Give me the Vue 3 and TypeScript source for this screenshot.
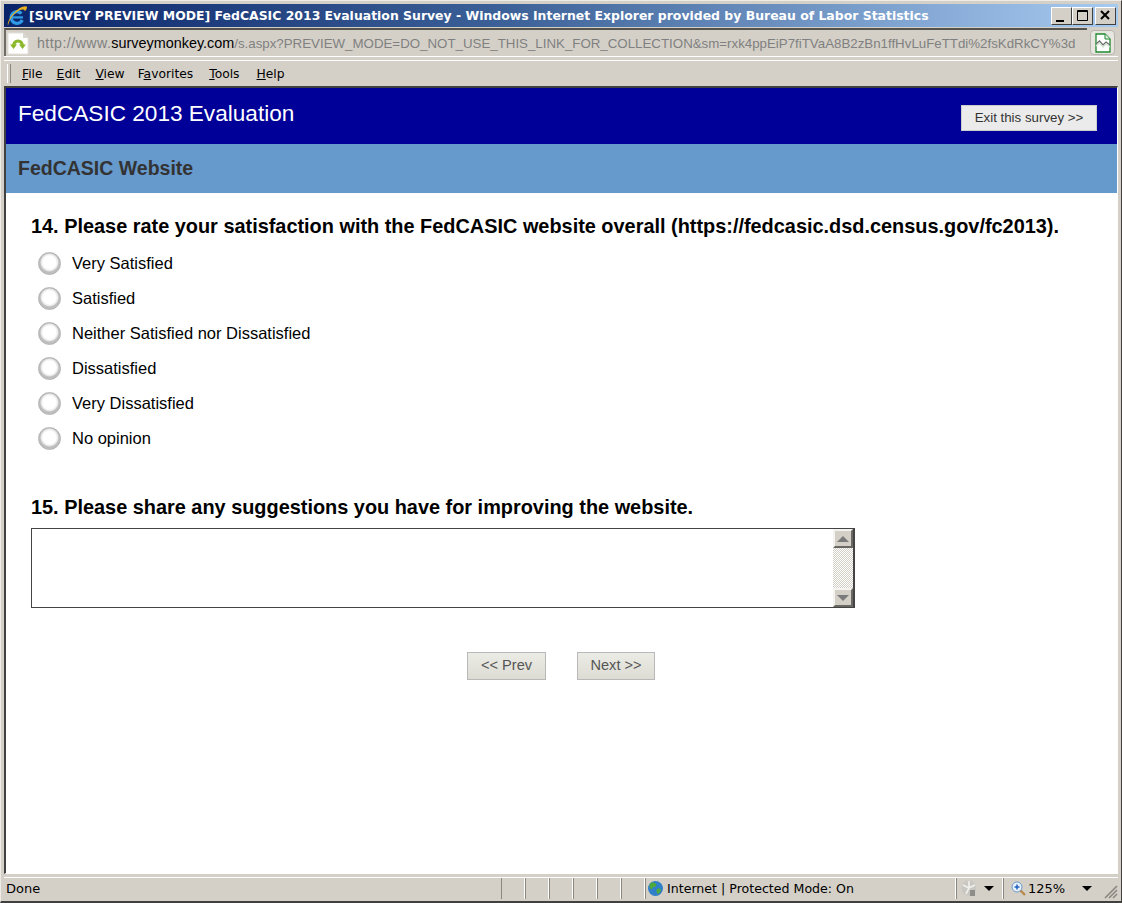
<template>
  <div class="window">
    <header class="titlebar">
      <svg class="ie-logo" width="22" height="22" viewBox="0 0 22 22">
        <circle cx="11" cy="12.500" r="5.800" fill="none" stroke="#2f9be6" stroke-width="3.400" stroke-dasharray="29 7" transform="rotate(25 11 12.500)" />
        <rect x="6" y="11.300" width="11" height="2.200" fill="#2f9be6" />
        <path d="M2 20.500C.5 17.500 6 8 13 3.500c4-2.500 7.500-3 8-1.500.3 1-.5 2.500-2 4-.6-2-3-2-5.500-.8C8 8 3.500 14 2 20.500z" fill="#e9b020" />
      </svg>
      <span class="title-text">[SURVEY PREVIEW MODE] FedCASIC 2013 Evaluation Survey - Windows Internet Explorer provided by Bureau of Labor Statistics</span>
      <div class="win-buttons">
        <button class="win-btn"><svg width="21" height="17" viewBox="0 0 21 17"><rect x="5" y="13" width="8" height="2" fill="#000" /></svg></button>
        <button class="win-btn"><svg width="21" height="17" viewBox="0 0 21 17"><path d="M5.500 3.500h10v10h-10z M5 4.500h11" fill="none" stroke="#000" /></svg></button>
        <button class="win-btn close"><svg width="21" height="17" viewBox="0 0 21 17"><path d="M6 4l8 8M14 4l-8 8" stroke="#000" stroke-width="2" /></svg></button>
      </div>
    </header>

    <div class="addressbar">
      <div class="url-field">
        <svg class="page-icon" width="22" height="23" viewBox="0 0 22 23">
          <path d="M1 1h15l5 5v16H1z" fill="#fff" stroke="#e2e0db" />
          <path d="M16 1v5h5z" fill="#d8d6d0" />
          <path d="M6.500 14c.5-3.500 2.300-5 4.500-5s4 1.500 4.500 5" fill="none" stroke="#8cb82b" stroke-width="3.200" />
          <path d="M3 12.500h7L6.500 17zM12 12.500h7L15.500 17z" fill="#8cb82b" />
        </svg>
        <span class="url"><span class="scheme">http://www.</span><span class="domain">surveymonkey.com</span><span class="dim">/s.aspx?PREVIEW_MODE=DO_NOT_USE_THIS_LINK_FOR_COLLECTION&amp;sm=rxk4ppEiP7fiTVaA8B2zBn1ffHvLuFeTTdi%2fsKdRkCY%3d</span></span>
      </div>
      <button class="compat-btn">
        <svg width="16" height="20" viewBox="0 0 16 20">
          <path d="M1 1h9l5 5v13H1z" fill="#fff" stroke="#1f8a2e" stroke-width="1.300" />
          <path d="M10 1v5h5" fill="#dff0df" stroke="#1f8a2e" />
          <path d="M1 11l3.500-3 3.500 4 3-3 4 3" fill="none" stroke="#6d6d6d" stroke-width="1.300" />
          <path d="M1 13l3.500-3 3.500 4 3-3 4 3" fill="none" stroke="#cfe6cf" stroke-width="1.300" />
        </svg>
      </button>
    </div>

    <nav class="menubar">
      <span class="grip"></span>
      <span class="menu-item file"><u>F</u>ile</span>
      <span class="menu-item"><u>E</u>dit</span>
      <span class="menu-item view"><u>V</u>iew</span>
      <span class="menu-item favorites">F<u>a</u>vorites</span>
      <span class="menu-item tools"><u>T</u>ools</span>
      <span class="menu-item"><u>H</u>elp</span>
    </nav>

    <main class="viewport">
      <div class="survey-head">
        <h1>FedCASIC 2013 Evaluation</h1>
        <button class="exit-btn">Exit this survey &gt;&gt;</button>
      </div>
      <div class="page-title">FedCASIC Website</div>

      <section class="survey-body">
        <h2>14. Please rate your satisfaction with the FedCASIC website overall (https://fedcasic.dsd.census.gov/fc2013).</h2>
        <ul class="options">
          <li v-for="opt in options" :key="opt" class="option">
            <span class="radio"></span>
            <span>{{ opt }}</span>
          </li>
        </ul>

        <h2 class="q15">15. Please share any suggestions you have for improving the website.</h2>
        <div class="textarea">
          <div class="scrollbar">
            <span class="sb-btn"><i class="tri up"></i></span>
            <span class="sb-track"></span>
            <span class="sb-btn"><i class="tri down"></i></span>
          </div>
        </div>

        <div class="nav-buttons">
          <button class="nav-btn prev">&lt;&lt; Prev</button>
          <button class="nav-btn next">Next &gt;&gt;</button>
        </div>
      </section>
    </main>

    <footer class="statusbar">
      <div class="status-text">Done</div>
      <div class="status-cell"></div>
      <div class="status-cell"></div>
      <div class="status-cell"></div>
      <div class="status-cell"></div>
      <div class="status-cell"></div>
      <div class="status-cell"></div>
      <div class="status-zone">
        <svg width="17" height="17" viewBox="0 0 17 17">
          <circle cx="8.500" cy="8.500" r="7.500" fill="#2f7fc9" />
          <path d="M4 3c2-1 4 0 5 1s0 3-2 3-1 3-3 2-2-5 0-6zM10 9c2-1 4 0 4 1s-2 4-3 4-2-4-1-5z" fill="#4fa83d" />
        </svg>
        <span>Internet | Protected Mode: On</span>
      </div>
      <div class="status-tool">
        <svg width="20" height="19" viewBox="0 0 20 19">
          <circle cx="9" cy="9" r="7.500" fill="#c9c7c1" />
          <path d="M3 6l6 3-3 6M9 2l0 7 6-3" fill="none" stroke="#f2f1ee" stroke-width="1.600" />
          <rect x="10" y="11" width="5" height="6" fill="#8f8d88" />
        </svg>
        <i class="caret"></i>
      </div>
      <div class="status-zoom">
        <svg width="15" height="15" viewBox="0 0 15 15">
          <line x1="9" y1="9" x2="14" y2="14" stroke="#b8894a" stroke-width="2.400" />
          <circle cx="6" cy="6" r="5" fill="#e8f2fb" stroke="#6f97c4" />
          <path d="M3.500 6h5M6 3.500v5" stroke="#1f5fc0" stroke-width="1.500" />
        </svg>
        <span>125%</span>
        <i class="caret zoom-caret"></i>
      </div>
      <svg class="grip-corner" width="14" height="14" viewBox="0 0 14 14">
        <path d="M13 1L1 13M13 5l-8 8M13 9l-4 4" stroke="#8a8780" stroke-width="1.600" />
      </svg>
    </footer>
  </div>
</template>

<script setup lang="ts">
const options: string[] = [
  'Very Satisfied',
  'Satisfied',
  'Neither Satisfied nor Dissatisfied',
  'Dissatisfied',
  'Very Dissatisfied',
  'No opinion',
]
</script>

<style>
html, body {
  margin: 0;
  background: #d4d0c8;
}
</style>

<style scoped>
.window {
  width: 1122px;
  height: 903px;
  box-sizing: border-box;
  background: #d4d0c8;
  border: 1px solid;
  border-color: #eeece7 #404040 #404040 #eeece7;
  border-bottom-width: 2px;
  padding: 3px 3px 2px 3px;
  display: flex;
  flex-direction: column;
  overflow: hidden;
  position: relative;
  font-family: "Liberation Sans", Arial, sans-serif;
}

.titlebar {
  height: 23px;
  flex: none;
  display: flex;
  align-items: center;
  background: linear-gradient(90deg, #0a246a 0%, #3c6198 45%, #a6caf0 100%);
  color: #fff;
}

.ie-logo {
  margin: 0 1px 0 2px;
  flex: none;
}

.title-text {
  font-family: "DejaVu Sans", sans-serif;
  font-size: 12.45px;
  font-weight: 700;
  white-space: nowrap;
  flex: 1;
  overflow: hidden;
}

.win-buttons {
  display: flex;
  margin-right: 2px;
}

.win-btn {
  width: 21px;
  height: 18px;
  padding: 0;
  background: #d4d0c8;
  border: 1px solid;
  border-color: #fff #404040 #404040 #fff;
  display: block;
}
.win-btn svg {
  display: block;
  margin: -1px;
}
.win-btn.close {
  margin-left: 2px;
}

.addressbar {
  height: 30px;
  flex: none;
  display: flex;
  border-bottom: 1px solid #fff;
  box-sizing: border-box;
}

.url-field {
  flex: 1;
  margin: 1px 3px 0 0;
  display: flex;
  align-items: center;
  border-top: 2px solid #55534e;
  border-left: 2px solid #6e6c67;
  height: 28px;
  box-sizing: border-box;
  overflow: hidden;
}

.page-icon {
  margin: 0 8px 0 1px;
  flex: none;
}

.url {
  font-size: 13.3px;
  color: #808080;
  white-space: nowrap;
}
.scheme {
  font-size: 14.2px;
  letter-spacing: 0.45px;
}
.domain {
  font-size: 14.4px;
  color: #000;
}

.compat-btn {
  width: 25px;
  height: 25px;
  margin: 3px 3px 0 0;
  padding: 0;
  background: #e8e6e1;
  border: 1px solid #b8b5ae;
  border-radius: 4px;
  display: flex;
  align-items: center;
  justify-content: center;
}

.menubar {
  height: 26px;
  margin-top: 3px;
  flex: none;
  display: flex;
  align-items: center;
  border-top: 1px solid #fff;
  box-sizing: border-box;
  font-family: "DejaVu Sans", sans-serif;
  font-size: 12.3px;
  color: #000;
  padding-left: 3px;
}

.grip {
  width: 2px;
  height: 19px;
  border-left: 1px solid #fff;
  border-right: 1px solid #8a8780;
  margin-right: 11px;
}

.menu-item {
  margin-right: 15px;
}
.menu-item.file {
  margin-right: 14px;
}
.menu-item.view {
  margin-right: 13px;
}
.menu-item.favorites {
  margin-right: 16px;
}
.menu-item.tools {
  margin-right: 17px;
}

.viewport {
  flex: 1;
  min-height: 0;
  background: #fff;
  border-top: 2px solid #404040;
  border-left: 2px solid #404040;
  border-right: 1px solid #fff;
  border-bottom: 1px solid #fff;
}

.survey-head {
  height: 56px;
  background: #000099;
  display: flex;
  justify-content: space-between;
  box-sizing: border-box;
  padding: 0 20px 0 12px;
}

.survey-head h1 {
  margin: 13px 0 0;
  font-size: 22.6px;
  line-height: 26px;
  font-weight: 400;
  color: #fff;
}

.exit-btn {
  margin-top: 17px;
  width: 136px;
  height: 26px;
  padding: 0 0 2px;
  background: #ebebeb;
  border: 1px solid #ccc;
  font-family: "Liberation Sans", sans-serif;
  font-size: 13.3px;
  color: #333;
}

.page-title {
  height: 49px;
  background: #6699cc;
  box-sizing: border-box;
  padding: 13px 0 0 12px;
  font-size: 19.5px;
  line-height: 23px;
  font-weight: 700;
  color: #333;
}

.survey-body {
  padding: 20px 0 0 25px;
  color: #000;
}

h2 {
  margin: 0;
  font-size: 19.9px;
  line-height: 26px;
  font-weight: 700;
  white-space: nowrap;
}

.options {
  list-style: none;
  margin: 7px 0 0 7px;
  padding: 0;
}

.option {
  height: 35px;
  display: flex;
  align-items: center;
  gap: 11px;
  font-size: 16.5px;
}

.radio {
  width: 23px;
  height: 23px;
  box-sizing: border-box;
  border-radius: 50%;
  border: 1px solid #b4b4b4;
  background: radial-gradient(circle closest-side at 50% 45%, #fff 68%, #e8e8e8 88%, #bebebe 100%);
  flex: none;
}

.q15 {
  margin-top: 38px;
}

.textarea {
  margin-top: 8px;
  width: 824px;
  height: 80px;
  box-sizing: border-box;
  border: 1px solid #444;
  border-right-width: 2px;
  display: flex;
  justify-content: flex-end;
}

.scrollbar {
  width: 20px;
  display: flex;
  flex-direction: column;
  background: repeating-conic-gradient(#d4d0c8 0 25%, #fff 0 50%) 0 0 / 2px 2px;
}

.sb-btn {
  height: 19px;
  flex: none;
  box-sizing: border-box;
  background: #d4d0c8;
  border: 2px solid;
  border-color: #f4f3ef #6a6862 #6a6862 #f4f3ef;
  display: flex;
  align-items: center;
  justify-content: center;
}

.sb-track {
  flex: 1;
}

.tri {
  width: 0;
  height: 0;
  border-left: 6px solid transparent;
  border-right: 6px solid transparent;
}
.tri.up {
  border-bottom: 6px solid #7a7a7a;
}
.tri.down {
  border-top: 6px solid #7a7a7a;
}

.nav-buttons {
  margin: 44px 0 0 436px;
  display: flex;
  gap: 31px;
}

.nav-btn {
  height: 28px;
  padding: 0 0 2px;
  box-sizing: border-box;
  background: linear-gradient(#ecece6, #dcdcd4);
  border: 1px solid #b8b8b8;
  font-family: "Liberation Sans", sans-serif;
  font-size: 14.6px;
  color: #555;
}
.prev {
  width: 79px;
}
.next {
  width: 78px;
}

.statusbar {
  height: 22px;
  margin-top: 3px;
  flex: none;
  display: flex;
  align-items: stretch;
  font-family: "DejaVu Sans", sans-serif;
  font-size: 12px;
  color: #000;
  position: relative;
  border-top: 1px solid #fff;
  box-sizing: border-box;
}

.status-text {
  width: 497px;
  box-sizing: border-box;
  padding: 3px 0 0 2px;
  flex: none;
  font-size: 13px;
}

.status-cell {
  width: 24px;
  flex: none;
  box-sizing: border-box;
  border-left: 1px solid #8a8780;
  border-right: 1px solid #fff;
}

.status-zone {
  width: 311px;
  flex: none;
  display: flex;
  align-items: center;
  gap: 3px;
  box-sizing: border-box;
  padding-left: 1px;
  border-left: 1px solid #8a8780;
  border-right: 1px solid #fff;
  font-size: 12.6px;
}

.status-tool {
  width: 47px;
  flex: none;
  display: flex;
  align-items: center;
  gap: 4px;
  box-sizing: border-box;
  padding-left: 3px;
  border-left: 1px solid #8a8780;
  border-right: 1px solid #fff;
}

.status-zoom {
  flex: 1;
  display: flex;
  align-items: center;
  gap: 2px;
  padding-left: 7px;
  border-left: 1px solid #8a8780;
  font-size: 13px;
}

.caret {
  width: 0;
  height: 0;
  border-left: 5px solid transparent;
  border-right: 5px solid transparent;
  border-top: 5px solid #000;
}
.zoom-caret {
  margin-left: 15px;
}

.grip-corner {
  position: absolute;
  right: 0;
  bottom: 0;
}
</style>
